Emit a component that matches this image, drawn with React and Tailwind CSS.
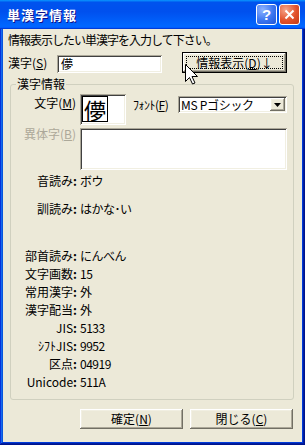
const sunken =
  'shadow-[inset_1px_1px_#aca899,inset_-1px_-1px_#ffffff,inset_2px_2px_#404040,inset_-2px_-2px_#f1efe2]'
const raised =
  'shadow-[inset_-1px_-1px_#716f64,inset_1px_1px_#ffffff,inset_-2px_-2px_#aca899,inset_2px_2px_#f1efe2]'

const info = [
  ['部首読み', 'にんべん'],
  ['文字画数', '15'],
  ['常用漢字', '外'],
  ['漢字配当', '外'],
  ['JIS', '5133'],
  ['ｼﾌﾄJIS', '9952'],
  ['区点', '04919'],
  ['Unicode', '511A'],
]

export default function App() {
  return (
    <div className="relative w-[305px] h-[445px] flex flex-col bg-[#0831d9] shadow-[inset_-1px_-1px_#00138c,inset_1px_1px_#0831d9,inset_-2px_-2px_#001ea0,inset_2px_2px_#166aee,inset_-3px_-3px_#003bda,inset_3px_3px_#0855dd] font-['Noto_Sans_CJK_JP','Noto_Sans_CJK_SC',sans-serif] text-[12px] text-black overflow-hidden">
      <TitleBar />

      <div className="flex-1 mx-[3px] mb-[3px] bg-[#ece9d8] flex flex-col px-[5px]">
        <div className="pt-[4px] leading-[14px] tracking-[-1px]">情報表示したい単漢字を入力して下さい。</div>

        {/* kanji input row */}
        <div className="mt-[5px] flex h-[21px] items-center">
          <div className="w-[49px] leading-[14px]">
            漢字(<span className="underline">S</span>)
          </div>
          <div className={`w-[105px] h-[18px] self-end bg-white px-[4px] flex items-center leading-[14px] ${sunken}`}>儚</div>
          <button className={`ml-[20px] w-[105px] h-full flex border border-black bg-[#ece9d8] ${raised}`}>
            <span className="flex-1 m-[3px] border border-dotted border-black flex items-center justify-center leading-[12px]">
              情報表示(<span className="underline">D</span>)↓
            </span>
          </button>
        </div>

        {/* group box */}
        <fieldset className="mt-[5px] ml-[2px] w-[284px] border border-[#d0d0bf] rounded-[3px] pb-[8px]">
          <legend className="ml-[5px] px-[1px] leading-[12px]">漢字情報</legend>

          <div className="mt-[4px] flex">
            <div className="w-[65px] text-right leading-[14px] mt-[2px]">
              文字(<span className="underline">M</span>)
            </div>
            <div className={`ml-[4px] w-[46px] h-[31px] bg-white p-[2px] ${sunken}`}>
              <div className="w-[26px] h-[26px] border border-black flex items-center justify-center text-[22px] leading-none">儚</div>
            </div>
            <div className="ml-[7px] mt-[2px] h-[17px] flex items-center">
              <div className="w-[42px] leading-[14px] tracking-[-0.5px]">
                ﾌｫﾝﾄ(<span className="underline">F</span>)
              </div>
              <div className={`ml-[3px] w-[109px] h-[17px] bg-white flex items-center pl-[3px] pr-[2px] ${sunken}`}>
                <span className="flex-1 leading-[13px] tracking-[-0.3px]">MS Pゴシック</span>
                <span className={`w-[15px] h-[13px] bg-[#ece9d8] flex items-center justify-center ${raised}`}>
                  <svg width="7" height="4" viewBox="0 0 7 4">
                    <path d="M0 0H7L3.5 4Z" fill="#000" />
                  </svg>
                </span>
              </div>
            </div>
          </div>

          <div className="mt-[3px] flex">
            <div className="w-[65px] text-right leading-[12px] text-[#aca899]">
              異体字(<span className="underline">B</span>)
            </div>
            <div className={`ml-[4px] w-[207px] h-[42px] bg-white ${sunken}`} />
          </div>

          <div className="mt-[2px] flex flex-col">
            <InfoRow label="音読み" value="ボウ" className="h-[28px]" />
            <InfoRow label="訓読み" value="はかな･い" className="h-[47px]" />
            {info.map(([l, v]) => (
              <InfoRow key={l} label={l} value={v} className="h-[18px]" />
            ))}
          </div>
        </fieldset>

        <div className="mt-[9px] mr-[4px] flex justify-end gap-[7px]">
          <button className={`w-[103px] h-[20px] bg-[#ece9d8] flex items-center justify-center leading-[12px] ${raised}`}>
            確定(<span className="underline">N</span>)
          </button>
          <button className={`w-[103px] h-[20px] bg-[#ece9d8] flex items-center justify-center leading-[12px] ${raised}`}>
            閉じる(<span className="underline">C</span>)
          </button>
        </div>
      </div>

      {/* mouse pointer */}
      <svg className="absolute left-[185px] top-[64px]" width="13" height="21" viewBox="0 0 13 21">
        <path d="M0.5 0.5V17.5L4.5 13.5L7.5 20L10 19L7 12.5H12.5Z" fill="#fff" stroke="#000" strokeWidth="1" strokeLinejoin="miter" />
      </svg>
    </div>
  )
}

function TitleBar() {
  return (
    <div className="h-[29px] flex items-center pl-[7px] pr-[5px] bg-[linear-gradient(180deg,#0997ff,#0053ee_8%,#0050ee_40%,#0066ff_88%,#0066ff_93%,#005bff_95%,#003dd7_96%,#003dd7)]">
      <span className="text-[13px] font-bold text-white tracking-[1px] leading-[16px] [text-shadow:1px_1px_#0f1089]">単漢字情報</span>
      <div className="flex-1" />
      <div className="flex gap-[2px]">
        <div className="w-[21px] h-[21px] rounded-[3px] border border-white bg-[radial-gradient(circle_at_30%_25%,#8fb4ff,#3c76f0_55%,#1f55d6)] flex items-center justify-center">
          <span className="text-white font-bold text-[15px] leading-none font-['Liberation_Sans',sans-serif]">?</span>
        </div>
        <div className="w-[21px] h-[21px] rounded-[3px] border border-white bg-[radial-gradient(circle_at_30%_25%,#f6a58a,#e2522c_55%,#c43a16)] flex items-center justify-center">
          <svg width="11" height="11" viewBox="0 0 11 11">
            <path d="M1.5 1.5L9.5 9.5M9.5 1.5L1.5 9.5" stroke="#fff" strokeWidth="2" />
          </svg>
        </div>
      </div>
    </div>
  )
}

function InfoRow({ label, value, className }) {
  return (
    <div className={`flex leading-[18px] ${className}`}>
      <div className="w-[66px] text-right">
        {label}
        <span className="font-bold">:</span>
      </div>
      <div className="ml-[3px] tracking-[-0.5px]">{value}</div>
    </div>
  )
}
